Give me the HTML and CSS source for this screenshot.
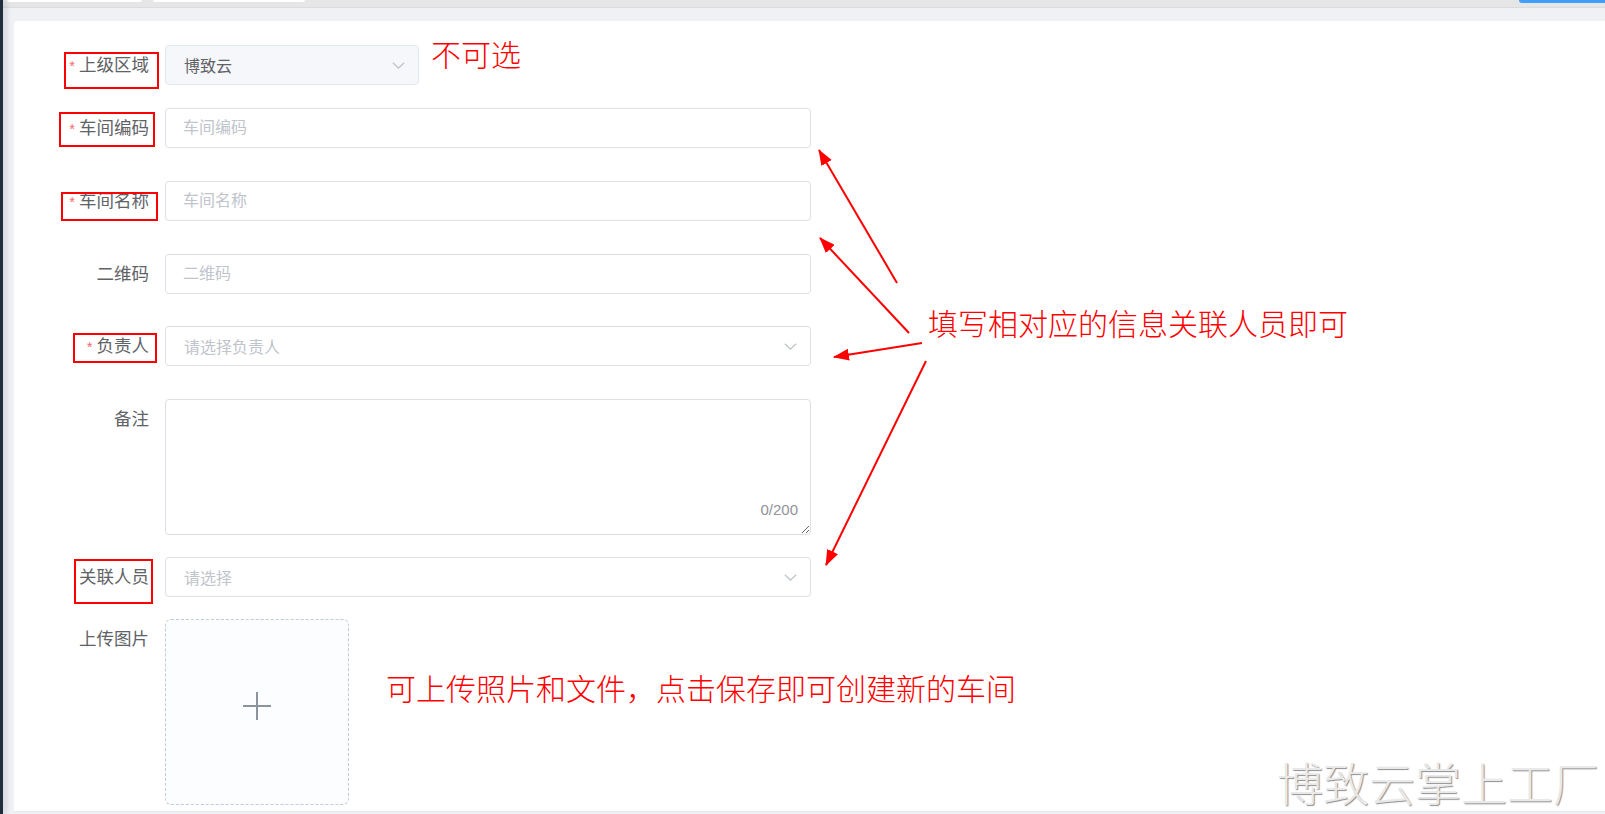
FILE: index.html
```html
<!DOCTYPE html>
<html lang="zh-CN">
<head>
    <meta charset="UTF-8">
    <meta name="viewport" content="width=device-width, initial-scale=1.0">
    <title>新增车间</title>
    <link rel="stylesheet" href="styles.css">
</head>
<body>
    <div class="app">
        <div class="sidebar-edge"></div>
        <div class="main">
            <!-- tags view, mostly scrolled out of the screenshot -->
            <div class="tags-bar">
                <span class="tag"></span>
                <span class="tag tag-wide"></span>
                <span class="tag-active"></span>
            </div>

            <div class="content">
                <div class="card">
                    <form class="workshop-form">
                        <div class="form-item">
                            <label class="form-label required">上级区域</label>
                            <div class="select select-short is-disabled">
                                <span>博致云</span>
                                <svg class="select-arrow" width="13" height="7" viewBox="0 0 13 7"><path d="M0.8 0.8 L6.5 6 L12.2 0.8" /></svg>
                            </div>
                            <span class="note note-inline">不可选</span>
                        </div>

                        <div class="form-item form-item--gap">
                            <label class="form-label required">车间编码</label>
                            <input class="input" type="text" placeholder="车间编码">
                        </div>

                        <div class="form-item form-item--gap">
                            <label class="form-label required">车间名称</label>
                            <input class="input" type="text" placeholder="车间名称">
                        </div>

                        <div class="form-item form-item--gap">
                            <label class="form-label">二维码</label>
                            <input class="input" type="text" placeholder="二维码">
                        </div>

                        <div class="form-item form-item--gap">
                            <label class="form-label required">负责人</label>
                            <div class="select">
                                <span class="select-placeholder">请选择负责人</span>
                                <svg class="select-arrow" width="13" height="7" viewBox="0 0 13 7"><path d="M0.8 0.8 L6.5 6 L12.2 0.8" /></svg>
                            </div>
                        </div>

                        <div class="form-item">
                            <label class="form-label">备注</label>
                            <div class="textarea-wrap">
                                <textarea class="textarea" maxlength="200"></textarea>
                                <span class="word-count">0/200</span>
                            </div>
                        </div>

                        <div class="form-item">
                            <label class="form-label">关联人员</label>
                            <div class="select">
                                <span class="select-placeholder">请选择</span>
                                <svg class="select-arrow" width="13" height="7" viewBox="0 0 13 7"><path d="M0.8 0.8 L6.5 6 L12.2 0.8" /></svg>
                            </div>
                        </div>

                        <div class="form-item">
                            <label class="form-label">上传图片</label>
                            <div class="upload">
                                <svg class="upload-plus" width="28" height="28" viewBox="0 0 28 28"><path d="M14 0 V28 M0 14 H28" /></svg>
                            </div>
                            <span class="note note-upload">可上传照片和文件，点击保存即可创建新的车间</span>
                        </div>
                    </form>
                </div>
            </div>
        </div>
    </div>

    <!-- hand drawn annotations on top of the screenshot -->
    <div class="annotations">
        <div class="mark-box mark-region"></div>
        <div class="mark-box mark-code"></div>
        <div class="mark-box mark-name"></div>
        <div class="mark-box mark-leader"></div>
        <div class="mark-box mark-members"></div>

        <svg class="arrows" width="1605" height="814" viewBox="0 0 1605 814">
            <defs>
                <marker id="head" markerWidth="16" markerHeight="12" refX="15" refY="6" orient="auto" markerUnits="userSpaceOnUse">
                    <path d="M0 0 L16 6 L0 12 Z" fill="#ff0000" />
                </marker>
            </defs>
            <line x1="897" y1="283" x2="819" y2="150" marker-end="url(#head)" />
            <line x1="909" y1="333" x2="820" y2="238" marker-end="url(#head)" />
            <line x1="922" y1="343" x2="834" y2="357" marker-end="url(#head)" />
            <line x1="926" y1="361" x2="826" y2="565" marker-end="url(#head)" />
        </svg>

        <span class="note note-float">填写相对应的信息关联人员即可</span>
        <span class="watermark">博致云掌上工厂</span>
    </div>
</body>
</html>
```

FILE: styles.css
```css
* {
    box-sizing: border-box;
}

html, body {
    margin: 0;
    padding: 0;
}

body {
    font-family: "Liberation Sans", "Noto Sans CJK SC", sans-serif;
    color: #606266;
    background-color: #f0f1f5;
    height: 814px;
    overflow: hidden;
    position: relative;
}

.app {
    display: flex;
    height: 814px;
}

.sidebar-edge {
    width: 3px;
    flex-shrink: 0;
    background-color: #1f2d3d;
    box-shadow: 2px 0 6px rgba(0, 21, 41, 0.25);
    position: relative;
    z-index: 1;
}

.main {
    flex: 1;
    min-width: 0;
    display: flex;
    flex-direction: column;
}

.tags-bar {
    height: 8px;
    background-color: #e6e6e6;
    border-bottom: 1px solid #dcdcdc;
    display: flex;
    align-items: flex-start;
    gap: 11px;
    padding-left: 4px;
}

.tag {
    width: 135px;
    height: 2px;
    background-color: #fff;
    border-radius: 0 0 3px 3px;
}

.tag-wide {
    width: 152px;
}

.tag-active {
    margin-left: auto;
    width: 86px;
    height: 3px;
    background-color: #409eff;
    border-radius: 0 0 0 3px;
}

.content {
    flex: 1;
    padding: 13px 0 0 11px;
}

.card {
    background-color: #fff;
    border-radius: 4px 0 0 0;
    height: 791px;
    padding-top: 24px;
    border-bottom: 1px solid #e4e7ed;
}

/* form */
.form-item {
    display: flex;
    align-items: flex-start;
    margin-bottom: 22px;
}

.form-item--gap {
    margin-bottom: 32px;
}

.form-label {
    width: 151px;
    flex-shrink: 0;
    padding-right: 16px;
    text-align: right;
    font-size: 17.5px;
    line-height: 40px;
    color: #606266;
}

.form-label.required::before {
    content: "*";
    color: #f56c6c;
    font-size: 15px;
    margin-right: 4px;
}

.input {
    width: 646px;
    height: 40px;
    border: 1px solid #dcdfe6;
    border-radius: 4px;
    padding: 0 17px;
    font-family: inherit;
    font-size: 16px;
    color: #606266;
    background-color: #fff;
    outline: none;
}

.input::placeholder {
    color: #c0c4cc;
}

.select {
    width: 646px;
    height: 40px;
    border: 1px solid #dcdfe6;
    border-radius: 4px;
    display: flex;
    align-items: center;
    justify-content: space-between;
    padding: 0 13px 0 18px;
    font-size: 16px;
    color: #606266;
    background-color: #fff;
}

.select-short {
    width: 254px;
}

.select.is-disabled {
    background-color: #f5f7fa;
    border-color: #e4e7ed;
}

.select-placeholder {
    color: #c0c4cc;
}

.select-arrow path {
    fill: none;
    stroke: #c0c4cc;
    stroke-width: 1.3;
}

.textarea-wrap {
    position: relative;
    width: 646px;
    height: 136px;
}

.textarea {
    display: block;
    width: 100%;
    height: 100%;
    border: 1px solid #dcdfe6;
    border-radius: 4px;
    padding: 8px 17px;
    font-family: inherit;
    font-size: 16px;
    color: #606266;
    resize: vertical;
    outline: none;
}

.word-count {
    position: absolute;
    right: 13px;
    bottom: 18px;
    font-size: 15px;
    line-height: 1;
    color: #909399;
}

.upload {
    width: 184px;
    height: 186px;
    border: 1px dashed #c0ccda;
    border-radius: 6px;
    background-color: #fbfdff;
    display: flex;
    align-items: center;
    justify-content: center;
}

.upload-plus {
    margin-bottom: 12px;
}

.upload-plus path {
    stroke: #8c939d;
    stroke-width: 2;
}

/* annotations */
.note {
    color: #ff0000;
    font-family: "Noto Sans CJK SC", sans-serif;
    font-weight: 300;
    font-size: 30px;
    line-height: 30px;
    white-space: nowrap;
}

.note-inline {
    margin: -7px 0 0 12px;
}

.note-upload {
    margin: 53px 0 0 37px;
}

.annotations {
    position: absolute;
    left: 0;
    top: 0;
    width: 1605px;
    height: 814px;
    pointer-events: none;
}

.mark-box {
    position: absolute;
    border: 2px solid #ff0000;
}

.mark-region {
    left: 64px;
    top: 52px;
    width: 95px;
    height: 37px;
}

.mark-code {
    left: 59px;
    top: 112px;
    width: 96px;
    height: 35px;
}

.mark-name {
    left: 61px;
    top: 192px;
    width: 97px;
    height: 29px;
}

.mark-leader {
    left: 73px;
    top: 333px;
    width: 84px;
    height: 30px;
}

.mark-members {
    left: 74px;
    top: 559px;
    width: 79px;
    height: 45px;
}

.arrows {
    position: absolute;
    left: 0;
    top: 0;
}

.arrows line {
    stroke: #ff0000;
    stroke-width: 2;
}

.note-float {
    position: absolute;
    left: 928px;
    top: 307px;
}

.watermark {
    position: absolute;
    left: 1277px;
    top: 758px;
    font-family: "Noto Sans CJK SC", sans-serif;
    font-weight: 300;
    font-size: 46px;
    line-height: 46px;
    color: #e9e9e9;
    text-shadow: 1px 1px 1px #8f8f8f;
    white-space: nowrap;
}
```
